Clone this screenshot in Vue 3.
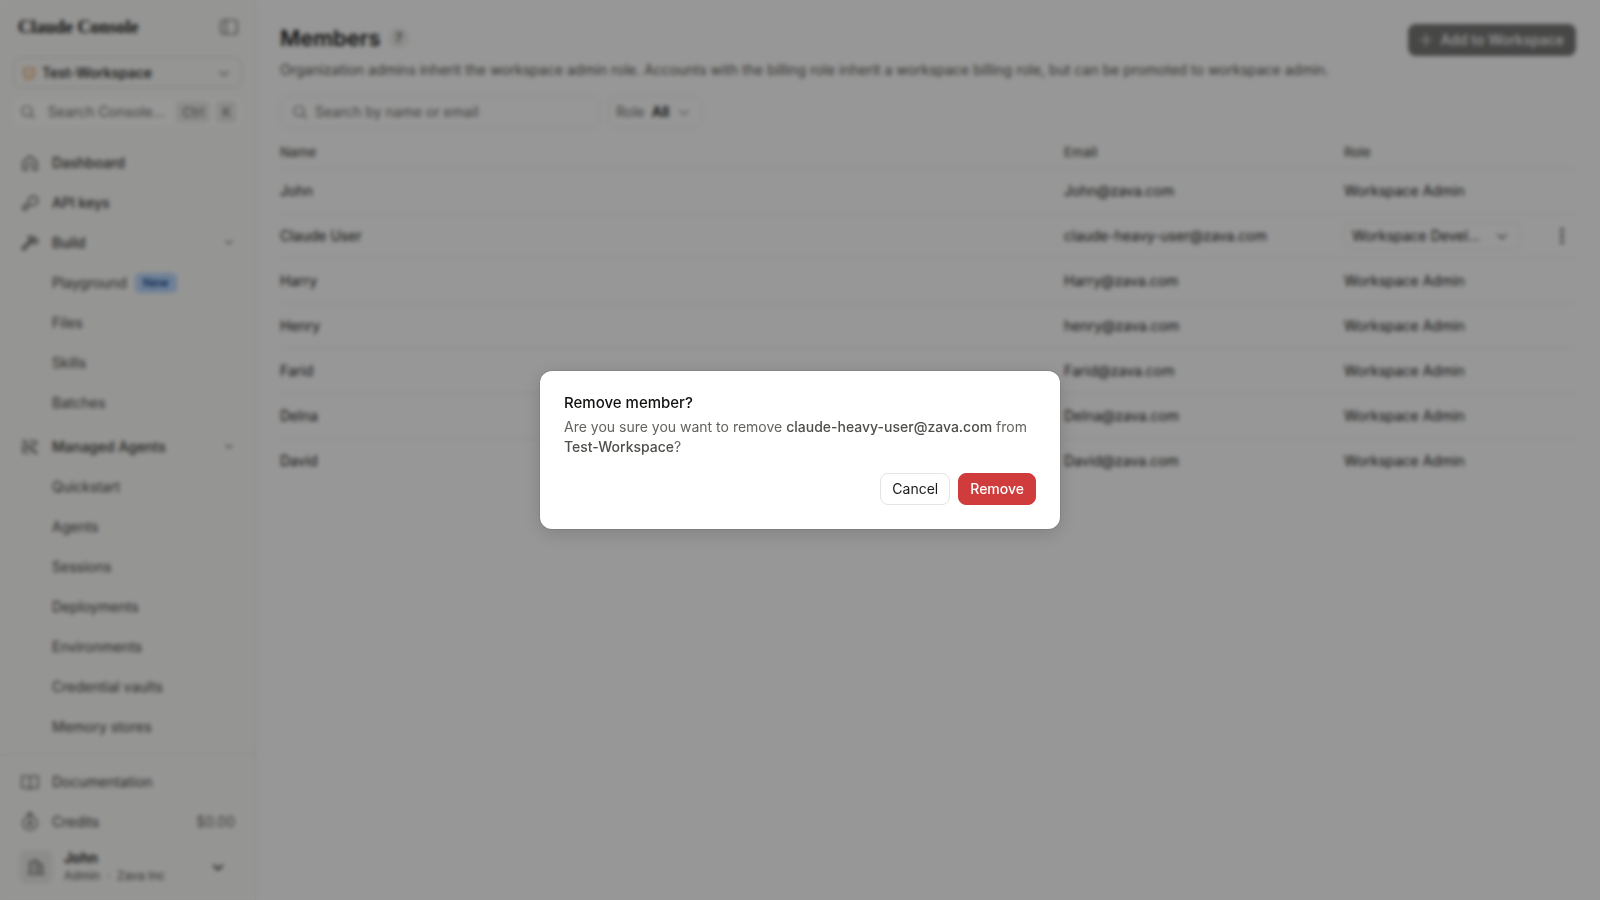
<template>
  <div class="app">
    <aside class="sidebar">
      <div class="sidebar__top">
        <div class="brand">
          <span class="brand__name">Claude Console</span>
          <button class="icon-btn" type="button" aria-label="Toggle sidebar">
            <svg width="20" height="20" viewBox="0 0 20 20" class="icon"><rect x="2" y="3" width="16" height="14" rx="2" /><path d="M7 3v14" /></svg>
          </button>
        </div>

        <label class="workspace">
          <svg width="14" height="14" viewBox="0 0 14 14" class="icon icon--orange"><path d="M2 2h10v6c0 3-2 5-5 5s-5-2-5-5zM5 5v1M9 5v1M5 9h4" /></svg>
          <select v-model="workspace" aria-label="Workspace">
            <option>Test-Workspace</option>
          </select>
          <svg width="14" height="14" viewBox="0 0 16 16" class="icon"><path d="M3 6l5 5 5-5" /></svg>
        </label>

        <label class="console-search">
          <svg width="16" height="16" viewBox="0 0 16 16" class="icon"><circle cx="7" cy="7" r="5" /><path d="M11 11l3 3" /></svg>
          <input type="text" placeholder="Search Console..." aria-label="Search Console" />
          <kbd>Ctrl</kbd>
          <kbd>K</kbd>
        </label>
      </div>

      <nav class="nav">
        <div v-for="(group, i) in navGroups" :key="i" class="nav__group">
          <template v-for="item in group" :key="item.label">
            <button v-if="item.expandable" class="nav__item nav__item--main" type="button" aria-expanded="true">
              <svg width="20" height="20" viewBox="0 0 20 20" class="icon"><path :d="icons[item.icon]" /></svg>
              <span>{{ item.label }}</span>
              <svg width="12" height="12" viewBox="0 0 12 12" class="icon nav__chevron"><path d="M3 4l3 3 3-3" /></svg>
            </button>
            <a v-else href="#" class="nav__item" :class="{ 'nav__item--main': item.icon, 'nav__item--sub': !item.icon }">
              <svg v-if="item.icon" width="20" height="20" viewBox="0 0 20 20" class="icon"><path :d="icons[item.icon]" /></svg>
              <span>{{ item.label }}</span>
              <span v-if="item.badge" class="nav__badge">{{ item.badge }}</span>
            </a>
          </template>
        </div>
      </nav>

      <div class="sidebar__bottom">
        <a href="#" class="nav__item">
          <svg width="20" height="20" viewBox="0 0 20 20" class="icon"><path :d="icons.book" /></svg>
          <span>Documentation</span>
        </a>
        <a href="#" class="nav__item">
          <svg width="20" height="20" viewBox="0 0 20 20" class="icon"><path :d="icons.credits" /></svg>
          <span>Credits</span>
          <span class="nav__amount">$0.00</span>
        </a>
        <button class="user" type="button" aria-haspopup="menu">
          <span class="user__avatar">
            <svg width="20" height="20" viewBox="0 0 20 20" class="icon"><path :d="icons.building" /></svg>
          </span>
          <span class="user__text">
            <span class="user__name">John</span>
            <span class="user__org">Admin &nbsp;·&nbsp; Zava Inc</span>
          </span>
          <svg width="14" height="14" viewBox="0 0 16 16" class="icon icon--bold"><path d="M3 6l5 5 5-5" /></svg>
        </button>
      </div>
    </aside>

    <main class="main">
      <header class="page-head">
        <div>
          <div class="page-head__title">
            <h1>Members</h1>
            <span class="count">{{ members.length }}</span>
          </div>
          <p>Organization admins inherit the workspace admin role. Accounts with the billing role inherit a workspace billing role, but can be promoted to workspace admin.</p>
        </div>
        <button class="add-btn" type="button">
          <svg width="16" height="16" viewBox="0 0 16 16" class="icon"><path d="M8 2v12M2 8h12" /></svg>
          Add to Workspace
        </button>
      </header>

      <div class="filters">
        <label class="filter filter--search">
          <svg width="16" height="16" viewBox="0 0 16 16" class="icon"><circle cx="7" cy="7" r="5" /><path d="M11 11l3 3" /></svg>
          <input v-model="query" type="text" placeholder="Search by name or email" aria-label="Search by name or email" />
        </label>
        <label class="filter filter--role">
          <span>Role</span>
          <select v-model="roleFilter">
            <option>All</option>
          </select>
          <svg width="14" height="14" viewBox="0 0 16 16" class="icon"><path d="M3 6l5 5 5-5" /></svg>
        </label>
      </div>

      <table class="members">
        <colgroup>
          <col />
          <col class="members__email" />
          <col class="members__role" />
          <col class="members__menu" />
        </colgroup>
        <thead>
          <tr>
            <th>Name</th>
            <th>Email</th>
            <th>Role</th>
            <th aria-label="Actions"></th>
          </tr>
        </thead>
        <tbody>
          <tr v-for="m in members" :key="m.email">
            <td>{{ m.name }}</td>
            <td>{{ m.email }}</td>
            <td>
              <label v-if="m.editable" class="role-select">
                <select v-model="m.role" :aria-label="`Role of ${m.name}`">
                  <option>{{ m.role }}</option>
                </select>
                <svg width="14" height="14" viewBox="0 0 16 16" class="icon"><path d="M3 6l5 5 5-5" /></svg>
              </label>
              <template v-else>{{ m.role }}</template>
            </td>
            <td class="members__actions">
              <button v-if="m.editable" class="icon-btn" type="button" aria-label="More actions" @click="open = true">
                <svg width="20" height="20" viewBox="0 0 20 20" fill="currentColor"><circle cx="10" cy="4" r="1.700" /><circle cx="10" cy="10" r="1.700" /><circle cx="10" cy="16" r="1.700" /></svg>
              </button>
            </td>
          </tr>
        </tbody>
      </table>
    </main>

    <div v-if="open" class="overlay">
      <div class="dialog" role="alertdialog" aria-modal="true" aria-labelledby="dlg-title" aria-describedby="dlg-text">
        <h2 id="dlg-title">Remove member?</h2>
        <p id="dlg-text">
          Are you sure you want to remove <strong>claude-heavy-user@zava.com</strong> from
          <strong>{{ workspace }}</strong>?
        </p>
        <div class="dialog__actions">
          <button class="btn" type="button" @click="open = false">Cancel</button>
          <button class="btn btn--danger" type="button" @click="open = false">Remove</button>
        </div>
      </div>
    </div>
  </div>
</template>

<script setup>
import { ref } from 'vue';

const open = ref(true);
const workspace = ref('Test-Workspace');
const query = ref('');
const roleFilter = ref('All');

const icons = {
  home: 'M3 9l7-6 7 6v8h-4v-4a3 3 0 0 0-6 0v4H3z',
  key: 'M9 9a4.500 4.500 0 1 1 3 3l-2 0-1 2H7l-1 3H3v-3zM13.500 6.500v.1',
  hammer: 'M8 4c3-1 5-1 7 1l3 3-3 3-3-3-8 9-2-2 9-8zM12 8l3-3',
  agents: 'M3 4h3M9 4h5a3 3 0 0 1 3 3M3 4l12 12M3 8v6a2 2 0 0 0 2 2h4M8 10h6M15 13v3h3M12 7h4M4 12h4',
  book: 'M10 5v11M2 4h6l2 1 2-1h6v12h-6l-2 1-2-1H2z',
  credits: 'M10 4a7 7 0 1 1 0 14a7 7 0 1 1 0-14M8 1h4l-2 3zM12 9h-3v4h3M10 8v6',
  building: 'M4 17V5l7-2v14M11 7h5v10M2 17h16M7 7v1M7 11v1M14 11v1',
};

const navGroups = [
  [
    { label: 'Dashboard', icon: 'home' },
    { label: 'API keys', icon: 'key' },
    { label: 'Build', icon: 'hammer', expandable: true },
    { label: 'Playground', badge: 'New' },
    { label: 'Files' },
    { label: 'Skills' },
    { label: 'Batches' },
  ],
  [
    { label: 'Managed Agents', icon: 'agents', expandable: true },
    { label: 'Quickstart' },
    { label: 'Agents' },
    { label: 'Sessions' },
    { label: 'Deployments' },
    { label: 'Environments' },
    { label: 'Credential vaults' },
    { label: 'Memory stores' },
  ],
];

const members = ref([
  { name: 'John', email: 'John@zava.com', role: 'Workspace Admin' },
  { name: 'Claude User', email: 'claude-heavy-user@zava.com', role: 'Workspace Developer', editable: true },
  { name: 'Harry', email: 'Harry@zava.com', role: 'Workspace Admin' },
  { name: 'Henry', email: 'henry@zava.com', role: 'Workspace Admin' },
  { name: 'Farid', email: 'Farid@zava.com', role: 'Workspace Admin' },
  { name: 'Delna', email: 'Delna@zava.com', role: 'Workspace Admin' },
  { name: 'David', email: 'David@zava.com', role: 'Workspace Admin' },
]);
</script>

<style>
body {
  margin: 0;
  background: #fcfcfc;
}
</style>

<style scoped>
.app {
  display: flex;
  min-height: 100vh;
  font-family: Inter, "Liberation Sans", sans-serif;
  font-size: 14px;
  line-height: 20px;
  color: #1a1a19;
}

.app *,
.app *::before {
  box-sizing: border-box;
}

button,
input,
select {
  font: inherit;
  color: inherit;
  border: 0;
  padding: 0;
  margin: 0;
  background: transparent;
  min-width: 0;
}

select {
  appearance: none;
  text-overflow: ellipsis;
}

input::placeholder {
  color: #6f6f6b;
  opacity: 1;
}

button {
  cursor: pointer;
}

.icon {
  fill: none;
  stroke: currentColor;
  stroke-width: 1.2;
  stroke-linecap: round;
  stroke-linejoin: round;
  flex-shrink: 0;
}

.icon--bold {
  stroke-width: 2;
}

.icon--orange {
  color: #e08a35;
}

.icon-btn {
  display: grid;
  place-items: center;
}

/* Sidebar */
.sidebar {
  width: 256px;
  flex-shrink: 0;
  height: 100vh;
  display: flex;
  flex-direction: column;
  background: #f9f9f7;
  border-right: 1px solid #e6e6e2;
}

.sidebar__top {
  padding: 16px 13px 0;
  display: flex;
  flex-direction: column;
}

.brand {
  display: flex;
  align-items: center;
  justify-content: space-between;
  height: 22px;
  padding: 0 3px 0 5px;
}

.brand__name {
  font-family: "Liberation Serif", serif;
  font-size: 18px;
  font-weight: 700;
  line-height: 20px;
}

.brand .icon-btn {
  color: #55554f;
}

.workspace {
  display: flex;
  align-items: center;
  gap: 6px;
  height: 31px;
  margin-top: 19px;
  padding: 0 10px 0 8px;
  border: 1px solid #d4d4cf;
  border-radius: 8px;
  color: #55554f;
}

.workspace select {
  flex: 1;
  font-weight: 500;
  color: #1a1a19;
}

.console-search {
  display: flex;
  align-items: center;
  gap: 6px;
  height: 28px;
  margin-top: 10px;
  padding: 0 5px 0 7px;
  border-radius: 8px;
  background: #fdfdfc;
  color: #6f6f6b;
}

.console-search input {
  flex: 1;
  padding-left: 6px;
}

.console-search kbd {
  height: 22px;
  padding: 0 6px;
  border-radius: 5px;
  background: #eaeae7;
  font-family: inherit;
  font-size: 13px;
  line-height: 22px;
}

.nav {
  flex: 1;
  min-height: 0;
  overflow: hidden;
  padding-top: 17px;
}

.nav__group {
  margin-bottom: 4px;
}

.nav__item {
  display: flex;
  align-items: center;
  gap: 12px;
  width: 100%;
  height: 40px;
  padding: 0 20px;
  color: #44443f;
  text-align: left;
  text-decoration: none;
}

.nav__item--main {
  font-weight: 500;
  color: #3a3a36;
}

.nav__item--sub {
  gap: 8px;
  padding-left: 52px;
}

.nav__chevron {
  margin-left: auto;
  color: #77776f;
}

.nav__badge {
  height: 20px;
  padding: 0 8px;
  border-radius: 5px;
  background: #bad7fb;
  color: #184f95;
  font-size: 12px;
  font-weight: 600;
}

.nav__amount {
  margin-left: auto;
  color: #6f6f6b;
}

.sidebar__bottom {
  padding: 7px 0 13px;
  border-top: 1px solid #e6e6e2;
}

.user {
  display: flex;
  align-items: center;
  gap: 11px;
  width: 100%;
  height: 40px;
  margin-top: 5px;
  padding: 0 30px 0 19px;
  text-align: left;
}

.user__avatar {
  display: grid;
  place-items: center;
  width: 34px;
  height: 34px;
  border-radius: 8px;
  background: #eaeae7;
  color: #3a3a36;
}

.user__text {
  flex: 1;
  display: flex;
  flex-direction: column;
}

.user__name {
  font-weight: 600;
  line-height: 18px;
}

.user__org {
  font-size: 12px;
  line-height: 18px;
  color: #55554f;
}

/* Members page */
.main {
  flex: 1;
  min-width: 0;
  padding: 24px;
}

.page-head {
  display: flex;
  align-items: flex-start;
  justify-content: space-between;
  gap: 24px;
}

.page-head__title {
  display: flex;
  align-items: center;
  gap: 8px;
  height: 28px;
}

.page-head h1 {
  margin: 0;
  font-size: 22px;
  line-height: 28px;
  font-weight: 600;
}

.page-head p {
  margin: 8px 0 0;
  color: #55554f;
}

.count {
  width: 20px;
  height: 20px;
  border-radius: 10px;
  background: #eaeae7;
  font-size: 12px;
  text-align: center;
}

.add-btn {
  display: flex;
  align-items: center;
  gap: 6px;
  flex-shrink: 0;
  height: 32px;
  padding: 0 12px 0 10px;
  border-radius: 8px;
  background: #777776;
  color: #fcfcfc;
  font-weight: 500;
}

.filters {
  display: flex;
  gap: 8px;
  margin-top: 16px;
}

.filter {
  display: flex;
  align-items: center;
  gap: 7px;
  height: 32px;
  padding: 0 11px;
  border: 1px solid #e8e7df;
  border-radius: 8px;
  color: #6f6f6b;
}

.filter--search {
  width: 320px;
}

.filter--search input {
  flex: 1;
}

.filter--role {
  gap: 7px;
  padding: 0 10px 0 7px;
}

.filter--role select {
  font-weight: 600;
  color: #1a1a19;
}

.members {
  width: 100%;
  margin-top: 8px;
  border-collapse: collapse;
  table-layout: fixed;
}

.members__email {
  width: 280px;
}

.members__role {
  width: 192px;
}

.members__menu {
  width: 40px;
}

.members th,
.members td {
  padding: 0;
  text-align: left;
  font-weight: 400;
  border-bottom: 1px solid #e8e7df;
}

.members th {
  height: 32px;
  font-size: 13px;
  font-weight: 500;
  color: #55554f;
}

.members td {
  height: 45px;
}

.members tbody tr:last-child td {
  border-bottom: 0;
}

.members__actions .icon-btn {
  margin: 0 4px 0 auto;
  color: #33332f;
}

.role-select {
  display: flex;
  align-items: center;
  width: 176px;
  height: 28px;
  padding: 0 10px 0 7px;
  border: 1px solid #e8e7df;
  border-radius: 8px;
}

.role-select select {
  width: 132px;
  margin-right: auto;
}

/* Confirmation dialog */
.overlay {
  position: fixed;
  inset: 0;
  display: grid;
  place-items: center;
  padding: 16px;
  background: rgba(0, 0, 0, 0.4);
  backdrop-filter: blur(2px);
}

.dialog {
  width: 100%;
  max-width: 520px;
  padding: 23px 24px 24px;
  border-radius: 12px;
  background: #ffffff;
  box-shadow: 0 0 0 1px rgba(0, 0, 0, 0.08), 0 4px 20px rgba(0, 0, 0, 0.16);
}

.dialog h2 {
  margin: 0;
  font-size: 15px;
  line-height: 18px;
  font-weight: 500;
  color: #111110;
}

.dialog p {
  margin: 5px 0 0;
  color: #62625e;
}

.dialog strong {
  font-weight: 500;
  color: #4f4f4b;
}

.dialog__actions {
  display: flex;
  justify-content: flex-end;
  gap: 8px;
  margin-top: 16px;
}

.btn {
  height: 32px;
  padding: 0 11px;
  border: 1px solid #e4e4e1;
  border-radius: 8px;
  background: #ffffff;
}

.btn--danger {
  border-color: #d03b3b;
  background: #d03b3b;
  color: #ffffff;
  font-weight: 500;
}
</style>
